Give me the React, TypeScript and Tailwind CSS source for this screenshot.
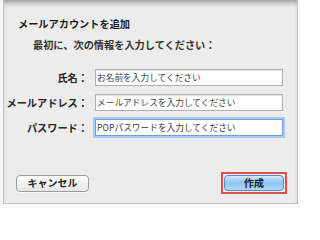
const jp = { fontFamily: '"Noto Sans CJK JP", "Noto Sans", sans-serif' };

function Field({ label, placeholder, focused }: { label: string; placeholder: string; focused?: boolean }) {
  return (
    <div className="flex h-[17px] items-center">
      <div className="w-[84px] text-right text-[10.2px] font-bold leading-[17px] text-[#262626] whitespace-nowrap">
        {label}
      </div>
      <div
        className={
          focused
            ? 'ml-[7px] h-[17px] w-[188px] border border-[#6f9fd6] bg-white pl-[1px] text-[8.7px] leading-[15px] text-[#3a3a3a] shadow-[0_0_0_2px_#a9c9ee] whitespace-nowrap'
            : 'ml-[7px] h-[17px] w-[188px] border border-[#b0b0b0] bg-white pl-[1px] text-[8.7px] leading-[15px] text-[#444] shadow-[inset_0_1px_1px_rgba(0,0,0,0.12)] whitespace-nowrap'
        }
      >
        {placeholder}
      </div>
    </div>
  );
}

export default function App() {
  return (
    <div className="h-[208px] w-[300px] bg-[#f7f7f7]" style={jp}>
      <div className="ml-[3px] flex h-[204px] w-[295px] flex-col border-x border-b border-[#c4c4c4] bg-[#ececec] shadow-[inset_0_5px_5px_-2px_rgba(0,0,0,0.32)]">
        <div className="mt-[17px] pl-[14px] text-[10.2px] font-bold leading-[14px] text-[#1e1e1e]">
          メールアカウントを追加
        </div>
        <div className="mt-[7px] pl-[29px] text-[10.2px] font-bold leading-[14px] text-[#333]">
          最初に、次の情報を入力してください：
        </div>

        <div className="mt-[17px] flex flex-col gap-[8px]">
          <Field label="氏名：" placeholder="お名前を入力してください" />
          <Field label="メールアドレス：" placeholder="メールアドレスを入力してください" />
          <Field label="パスワード：" placeholder="POPパスワードを入力してください" focused />
        </div>

        <div className="mt-[36px] flex items-center justify-between pl-[12px] pr-[10px]">
          <button className="h-[17px] w-[73px] rounded-[4px] border border-[#9c9c9c] bg-gradient-to-b from-white to-[#e6e6e6] text-[10px] font-bold leading-none text-[#222] shadow-[0_1px_0_rgba(255,255,255,0.8)]">
            キャンセル
          </button>
          <div className="flex h-[22px] w-[66px] items-center justify-center border-2 border-[#d8504f]">
            <button className="h-[16px] w-[60px] rounded-[4px] border border-[#5d88bb] bg-gradient-to-b from-[#d3e9fc] via-[#8cc3f2] to-[#b5dbfa] text-[10px] font-bold leading-none text-[#1c1c1c]">
              作成
            </button>
          </div>
        </div>
      </div>
    </div>
  );
}
